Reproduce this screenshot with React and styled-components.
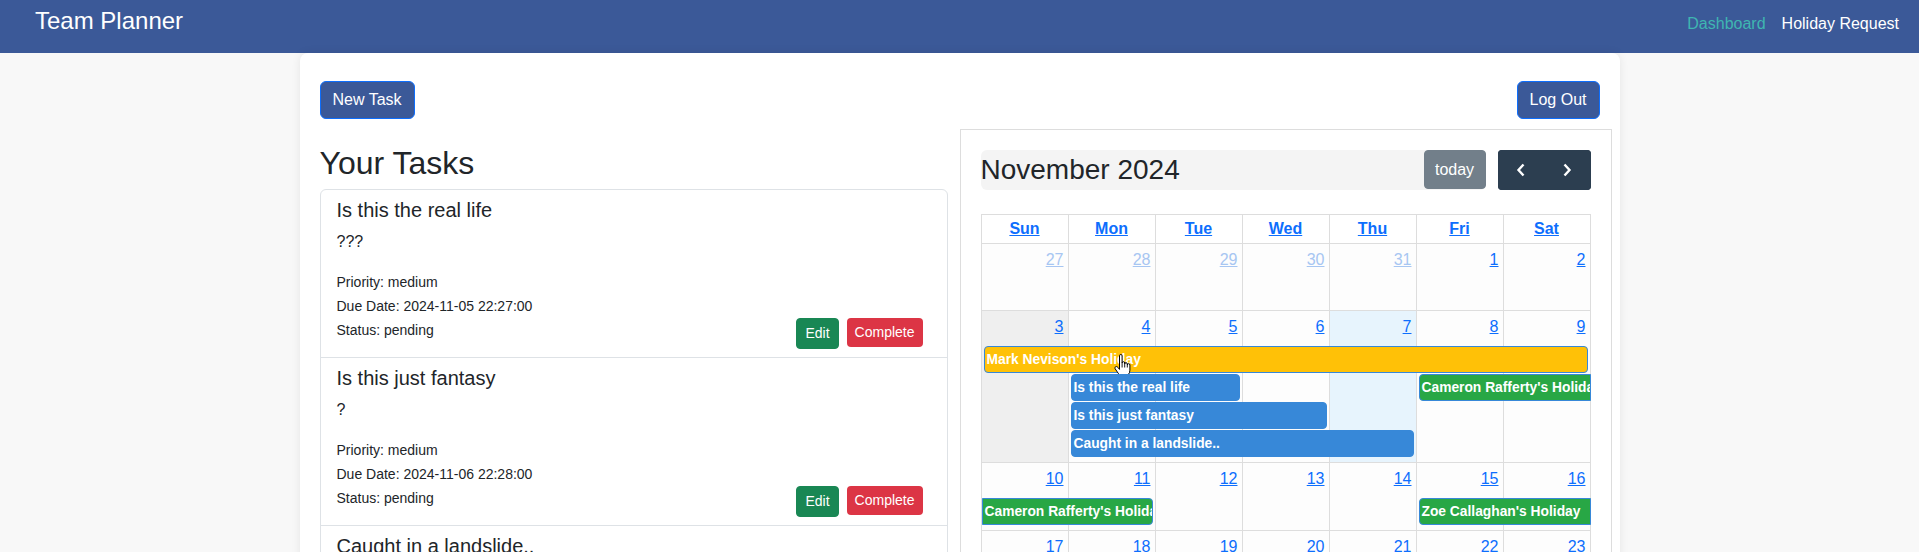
import React from 'react';
import styled, { createGlobalStyle } from 'styled-components';

const GlobalStyle = createGlobalStyle`
  html, body { margin: 0; padding: 0; background: #f8f8f8; overflow: hidden; }
  body {
    font-family: "Liberation Sans", Arial, sans-serif;
    color: #212529;
    font-size: 16px;
    line-height: 1.5;
  }
  *, *::before, *::after { box-sizing: border-box; }
`;

const NavBar = styled.nav`
  height: 53px;
  background: #3b5998;
  display: flex;
  justify-content: space-between;
  align-items: flex-start;
  padding: 0 20px 0 35px;
`;

const Brand = styled.a`
  color: #fff;
  font-size: 24px;
  line-height: 36px;
  padding-top: 3px;
  text-decoration: none;
`;

const NavLinks = styled.div`
  display: flex;
  gap: 16px;
  padding-top: 12px;
`;

const NavLink = styled.a`
  color: ${(p) => (p.$active ? '#3fb6b1' : '#ffffff')};
  font-size: 16px;
  line-height: 24px;
  text-decoration: none;
`;

const Card = styled.main`
  width: 1320px;
  min-height: 620px;
  margin: 0 auto;
  background: #fff;
  border-radius: 8px;
  box-shadow: 0 0 10px rgba(0, 0, 0, 0.08);
  padding: 28px 20px 20px;
`;

const TopBar = styled.div`
  display: flex;
  justify-content: space-between;
`;

const PrimaryButton = styled.button`
  font-family: inherit;
  font-size: 16px;
  line-height: 24px;
  padding: 6px 12px;
  background: #3b5998;
  color: #fff;
  border: 1px solid #0d6efd;
  border-radius: 6px;
  cursor: pointer;
`;

const Row = styled.div`
  display: grid;
  grid-template-columns: 1fr 1fr;
  margin: 10px -12px 0;
`;

const LeftCol = styled.section`
  padding: 0 12px;
`;

const Heading = styled.h2`
  font-size: 32px;
  font-weight: 500;
  line-height: 1.2;
  margin: 15px 0 7px;
`;

const TaskList = styled.ul`
  list-style: none;
  margin: 0;
  padding: 0;
  border: 1px solid #dee2e6;
  border-radius: 6px;
`;

const TaskItem = styled.li`
  padding: 8px 16px;
  & + & {
    border-top: 1px solid #dee2e6;
  }
`;

const TaskTitle = styled.h5`
  font-size: 20px;
  font-weight: 500;
  line-height: 1.2;
  margin: 0 0 8px;
`;

const TaskDesc = styled.p`
  margin: 0 0 16px;
  font-size: 16px;
  line-height: 24px;
`;

const TaskFooter = styled.div`
  display: flex;
  justify-content: space-between;
  align-items: flex-end;
`;

const Details = styled.div`
  padding-bottom: 7px;
`;

const DetailLine = styled.div`
  font-size: 14px;
  line-height: 24px;
`;

const Actions = styled.div`
  display: flex;
  align-items: flex-start;
`;

const SmallButton = styled.button`
  font-family: inherit;
  font-size: 14px;
  line-height: 21px;
  padding: 4px 8px;
  margin-right: 8px;
  color: #fff;
  background: ${(p) => p.$bg};
  border: ${(p) => (p.$bordered ? `1px solid ${p.$bg}` : 'none')};
  border-radius: 4px;
  cursor: pointer;
`;

const CalendarBox = styled.section`
  border: 1px solid #dddddd;
  padding: 20px;
  background: #fff;
`;

const Toolbar = styled.div`
  display: flex;
  align-items: flex-start;
  gap: 12px;
  margin-bottom: 24px;
`;

const TitleChunk = styled.div`
  flex: 1;
  height: 40px;
  display: flex;
  align-items: flex-start;
  justify-content: space-between;
  background: #f4f4f4;
  border-radius: 6px;
`;

const CalTitle = styled.h2`
  margin: 0;
  font-size: 28px;
  font-weight: 400;
  line-height: 40px;
`;

const TodayButton = styled.button`
  font-family: inherit;
  height: 39px;
  font-size: 16px;
  line-height: 24px;
  padding: 0 10.4px;
  color: #fff;
  background: #727f8a;
  border: 1px solid #727f8a;
  border-radius: 4px;
`;

const NavGroup = styled.div`
  display: flex;
  height: 40px;
  background: #2c3e50;
  border-radius: 4px;
  overflow: hidden;
`;

const ArrowButton = styled.button`
  width: 46.5px;
  height: 40px;
  border: none;
  background: #2c3e50;
  display: flex;
  align-items: center;
  justify-content: center;
  padding: 0;
  cursor: pointer;
`;

const Table = styled.div`
  border-left: 1px solid #dddddd;
  border-top: 1px solid #dddddd;
`;

const HeaderRow = styled.div`
  display: grid;
  grid-template-columns: repeat(7, 1fr);
  border-bottom: 1px solid #dddddd;
`;

const HeaderCell = styled.a`
  display: block;
  height: 28px;
  line-height: 28px;
  text-align: center;
  font-weight: 700;
  font-size: 16px;
  color: #0d6efd;
  text-decoration: underline;
  border-right: 1px solid #dddddd;
`;

const Week = styled.div`
  display: grid;
  grid-template-columns: repeat(7, 1fr);
  grid-template-rows: 35px repeat(${(p) => p.$slots}, 28px) minmax(4px, 1fr);
  min-height: 67px;
  border-bottom: 1px solid #dddddd;
`;

const DayBg = styled.div`
  grid-row: 1 / -1;
  grid-column: ${(p) => p.$col};
  border-right: 1px solid #dddddd;
  background: ${(p) => p.$bg};
`;

const DayNumber = styled.a`
  grid-row: 1;
  grid-column: ${(p) => p.$col};
  justify-self: end;
  align-self: start;
  padding: 4px 5px 0 0;
  font-size: 16px;
  line-height: 24px;
  color: ${(p) => (p.$other ? '#a7c6f2' : '#0d6efd')};
  text-decoration: underline;
`;

const EventBar = styled.div`
  position: relative;
  grid-column: ${(p) => p.$start} / span ${(p) => p.$span};
  grid-row: ${(p) => p.$row};
  height: 27px;
  margin: 0 ${(p) => (p.$contRight ? 0 : 3)}px 1px ${(p) => (p.$contLeft ? 0 : 2)}px;
  padding: 0 2px;
  background: ${(p) => p.$bg};
  border: 1px solid ${(p) => p.$border};
  border-radius: ${(p) => (p.$contLeft ? 0 : 4)}px ${(p) => (p.$contRight ? 0 : 4)}px
    ${(p) => (p.$contRight ? 0 : 4)}px ${(p) => (p.$contLeft ? 0 : 4)}px;
  color: #fff;
  font-size: 13.8px;
  font-weight: 700;
  line-height: 25px;
  white-space: nowrap;
  overflow: ${(p) => (p.$clip ? 'hidden' : 'visible')};
`;

const Pointer = styled.svg`
  position: absolute;
  left: 129px;
  top: 7px;
  width: 17px;
  height: 23px;
  pointer-events: none;
`;

const EVENT_COLORS = {
  yellow: { bg: '#ffc107', border: '#3788d8' },
  green: { bg: '#28a745', border: '#3788d8' },
  task: { bg: '#3788d8', border: '#3788d8' },
};

const tasks = [
  { title: 'Is this the real life', desc: '???', due: '2024-11-05 22:27:00' },
  { title: 'Is this just fantasy', desc: '?', due: '2024-11-06 22:28:00' },
  { title: 'Caught in a landslide..', desc: '?', due: '2024-11-07 22:29:00' },
];

const dayNames = ['Sun', 'Mon', 'Tue', 'Wed', 'Thu', 'Fri', 'Sat'];

const weeks = [
  { days: [27, 28, 29, 30, 31, 1, 2], otherUntil: 5, events: [] },
  {
    days: [3, 4, 5, 6, 7, 8, 9],
    events: [
      { title: "Mark Nevison's Holiday", start: 0, span: 7, slot: 0, color: 'yellow', cursor: true },
      { title: 'Is this the real life', start: 1, span: 2, slot: 1, color: 'task' },
      { title: 'Is this just fantasy', start: 1, span: 3, slot: 2, color: 'task' },
      { title: 'Caught in a landslide..', start: 1, span: 4, slot: 3, color: 'task' },
      { title: "Cameron Rafferty's Holiday", start: 5, span: 2, slot: 1, color: 'green', contRight: true },
    ],
  },
  {
    days: [10, 11, 12, 13, 14, 15, 16],
    events: [
      { title: "Cameron Rafferty's Holiday", start: 0, span: 2, slot: 0, color: 'green', contLeft: true },
      { title: "Zoe Callaghan's Holiday", start: 5, span: 2, slot: 0, color: 'green', contRight: true },
    ],
  },
  { days: [17, 18, 19, 20, 21, 22, 23], events: [] },
  { days: [24, 25, 26, 27, 28, 29, 30], events: [] },
];

function cellBg(weekIdx, dayIdx) {
  if (weekIdx === 1 && dayIdx === 0) return '#efefef';
  if (weekIdx === 1 && dayIdx === 4) return '#e7f4fd';
  return '#fdfdfd';
}

function Chevron({ dir }) {
  const d = dir === 'left' ? 'M7.5 1.5 L2.5 7 L7.5 12.5' : 'M2.5 1.5 L7.5 7 L2.5 12.5';
  return (
    <svg width="10" height="14" viewBox="0 0 10 14">
      <path d={d} fill="none" stroke="#fff" strokeWidth="2.4" strokeLinejoin="miter" />
    </svg>
  );
}

function HandCursor() {
  return (
    <Pointer viewBox="0 0 17 23">
      <path
        d="M5.5 1.8a1.3 1.3 0 0 1 2.6 0V9a1.3 1.3 0 0 1 2.6 0v1a1.3 1.3 0 0 1 2.6 0v1a1.3 1.3 0 0 1 2.6 0v5.2c0 3.2-2 5.8-5 5.8H8.4c-1.8 0-2.8-.8-3.8-2.2L1.3 15c-.6-.9-.4-1.9.4-2.3.8-.4 1.6 0 2.2.7l1.6 2V1.8z"
        fill="#fff"
        stroke="#000"
        strokeWidth="1"
        strokeLinejoin="round"
      />
      <path d="M8.1 9v4.5M10.7 10v3.5M13.3 11v2.5" stroke="#000" strokeWidth="0.9" fill="none" />
    </Pointer>
  );
}

function Calendar() {
  return (
    <CalendarBox>
      <Toolbar>
        <TitleChunk>
          <CalTitle>November 2024</CalTitle>
          <TodayButton>today</TodayButton>
        </TitleChunk>
        <NavGroup>
          <ArrowButton aria-label="prev">
            <Chevron dir="left" />
          </ArrowButton>
          <ArrowButton aria-label="next">
            <Chevron dir="right" />
          </ArrowButton>
        </NavGroup>
      </Toolbar>
      <Table>
        <HeaderRow>
          {dayNames.map((n) => (
            <HeaderCell key={n}>{n}</HeaderCell>
          ))}
        </HeaderRow>
        {weeks.map((w, wi) => {
          const slots = w.events.reduce((m, e) => Math.max(m, e.slot + 1), 0);
          return (
            <Week key={wi} $slots={slots}>
              {w.days.map((d, di) => (
                <DayBg key={`bg${di}`} $col={di + 1} $bg={cellBg(wi, di)} />
              ))}
              {w.days.map((d, di) => (
                <DayNumber key={`n${di}`} $col={di + 1} $other={w.otherUntil !== undefined && di < w.otherUntil}>
                  {d}
                </DayNumber>
              ))}
              {w.events.map((e, ei) => {
                const c = EVENT_COLORS[e.color];
                return (
                  <EventBar
                    key={`e${ei}`}
                    $start={e.start + 1}
                    $span={e.span}
                    $row={e.slot + 2}
                    $bg={c.bg}
                    $border={c.border}
                    $contLeft={e.contLeft}
                    $contRight={e.contRight}
                    $clip={!e.cursor}
                  >
                    {e.title}
                    {e.cursor && <HandCursor />}
                  </EventBar>
                );
              })}
            </Week>
          );
        })}
      </Table>
    </CalendarBox>
  );
}

export default function App() {
  return (
    <>
      <GlobalStyle />
      <NavBar>
        <Brand href="#">Team Planner</Brand>
        <NavLinks>
          <NavLink href="#" $active>Dashboard</NavLink>
          <NavLink href="#">Holiday Request</NavLink>
        </NavLinks>
      </NavBar>
      <Card>
        <TopBar>
          <PrimaryButton>New Task</PrimaryButton>
          <PrimaryButton>Log Out</PrimaryButton>
        </TopBar>
        <Row>
          <LeftCol>
            <Heading>Your Tasks</Heading>
            <TaskList>
              {tasks.map((t) => (
                <TaskItem key={t.title}>
                  <TaskTitle>{t.title}</TaskTitle>
                  <TaskDesc>{t.desc}</TaskDesc>
                  <TaskFooter>
                    <Details>
                      <DetailLine>Priority: medium</DetailLine>
                      <DetailLine>Due Date: {t.due}</DetailLine>
                      <DetailLine>Status: pending</DetailLine>
                    </Details>
                    <Actions>
                      <SmallButton $bg="#198754" $bordered>Edit</SmallButton>
                      <SmallButton $bg="#dc3545">Complete</SmallButton>
                    </Actions>
                  </TaskFooter>
                </TaskItem>
              ))}
            </TaskList>
          </LeftCol>
          <Calendar />
        </Row>
      </Card>
    </>
  );
}
